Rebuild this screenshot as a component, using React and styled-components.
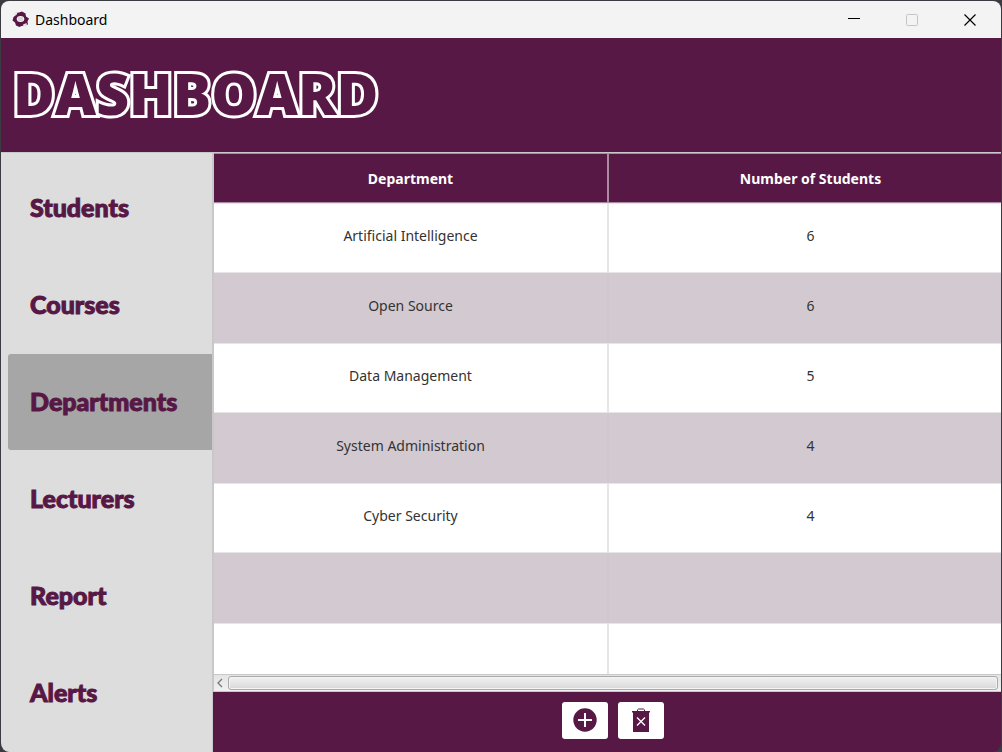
import React from "react";
import styled, { createGlobalStyle, css } from "styled-components";

const plum = "#571845";
const uiFont = '"Noto Sans", "Open Sans", sans-serif';
const displayFont = 'Lato, "Open Sans", sans-serif';

const GlobalStyle = createGlobalStyle`
  *, *::before, *::after { box-sizing: border-box; }
  body { margin: 0; background: #3b3b42; font-family: ${uiFont}; }
  button { border: 0; padding: 0; background: none; font: inherit; color: inherit; }
`;

const AppWindow = styled.div`
  display: flex;
  flex-direction: column;
  height: 100vh;
  border: 1px solid #3b3b42;
  border-bottom: 0;
  border-radius: 9px;
  overflow: hidden;
  background: ${plum};
`;

const TitleBar = styled.div`
  display: flex;
  align-items: center;
  flex: none;
  height: 37px;
  padding: 0 2px 0 11px;
  background: #f3f3f3;
  color: #000;
`;

const WindowName = styled.span`
  flex: 1;
  padding-left: 6px;
  font-size: 14px;
  line-height: 20px;
`;

const CaptionButton = styled.button`
  display: grid;
  place-items: center;
  width: 58px;
  height: 37px;
  color: ${(p) => (p.disabled ? "#c4c4c4" : "#000")};
`;

const Banner = styled.header`
  display: flex;
  align-items: center;
  flex: none;
  height: 115px;
  padding: 0 0 4px 12px;
  border-bottom: 1px solid #c8c8c8;
`;

const BannerTitle = styled.h1`
  margin: 0;
  font: 800 57px/64px "Open Sans", sans-serif;
  color: ${plum};
  -webkit-text-stroke: 6px #fff;
  paint-order: stroke fill;
  stroke-linejoin: round;
`;

const Body = styled.div`
  display: flex;
  flex: 1;
  min-height: 0;
`;

const Sidebar = styled.nav`
  display: flex;
  flex-direction: column;
  flex: none;
  gap: 1px;
  width: 212px;
  padding: 7px 0 0 7px;
  background: #ddd;
  border-right: 1px solid #c8c8c8;
`;

const NavItem = styled.a`
  display: flex;
  align-items: center;
  height: 96px;
  padding: 0 0 2px 22px;
  border-radius: 3px 0 0 3px;
  font: 900 25px/32px ${displayFont};
  color: ${plum};
  -webkit-text-stroke: 1px ${plum};
  text-decoration: none;
  background: ${(p) => (p.$active ? "#a6a6a6" : "transparent")};
`;

const Main = styled.main`
  display: flex;
  flex-direction: column;
  flex: 1;
  min-width: 0;
`;

const TableView = styled.div`
  flex: 1;
  min-height: 0;
  overflow: hidden;
  border-left: 1px solid #c8c8c8;
  background: #fff;
`;

const Table = styled.table`
  width: calc(100% + 11px);
  table-layout: fixed;
  border-collapse: separate;
  border-spacing: 0;
`;

const FirstColumn = styled.col`
  width: 49.5%;
`;

const HeadCell = styled.th`
  height: 50px;
  padding: 2px 0 0;
  background: ${plum};
  border: 0 solid #ab8ba2;
  border-width: 1px 0;
  color: #fff;
  font-size: 14px;
  font-weight: 700;
  line-height: 20px;
  &:first-child { border-right: 2px solid #ab8ba2; }
`;

const striped = css`
  background: #d3c9d0;
  border-color: #d3c9d0;
  &:first-child { border-right-color: #cfc7cc; }
`;

const Cell = styled.td`
  height: 70px;
  padding: 0 0 4px;
  text-align: center;
  font-size: 14px;
  line-height: 20px;
  color: #333;
  border: 0 solid #e6e6e6;
  border-width: 1px 0;
  &:first-child { border-right-width: 2px; }
  ${(p) => p.$striped && striped}
`;

const ScrollBar = styled.div`
  display: flex;
  align-items: center;
  flex: none;
  height: 18px;
  padding-right: 3px;
  background: linear-gradient(#e4e4e4, #f1f1f1);
  border: 0 solid #c8c8c8;
  border-width: 1px 0 1px 1px;
`;

const ScrollArrow = styled.button`
  display: grid;
  place-items: center;
  width: 14px;
  height: 14px;
  padding-right: 2px;
`;

const ScrollThumb = styled.div`
  flex: 1;
  height: 14px;
  border: 1px solid #a9a9a9;
  border-radius: 3px;
  background: linear-gradient(#f2f2f2, #d8d8d8);
  box-shadow: inset 0 0 0 1px #f4f4f4;
`;

const ActionBar = styled.footer`
  display: flex;
  justify-content: center;
  align-items: flex-start;
  flex: none;
  gap: 10px;
  height: 60px;
  padding: 10px 0 0 12px;
`;

const ActionButton = styled.button`
  display: grid;
  place-items: center;
  width: 46px;
  height: 37px;
  padding-bottom: 1px;
  border-radius: 3px;
  background: #fff;
`;

const Logo = () => (
  <svg width="17" height="17" viewBox="0 0 17 17" aria-hidden="true">
    <path d="M4 2l3-.5 3-1 3.500 2 .5 3 3 2-1.500 3 .5 3-3.500 1-3 .5-2 1-3.500-1.500-1-3L.5 9.500 1.500 6l2-1.500z" fill={plum} />
    <ellipse cx="8.500" cy="8" rx="3.800" ry="3" fill="#f3f3f3" />
    <path d="M2 4.500L2.500 2l3-.5L4.500 4zM11 13.500l3.500-1.500.5 3-3.500.5z" fill="#e9e4d8" />
    <path d="M6 7h5M6 9h5" stroke="#cdb7c6" />
  </svg>
);

const departments = [
  ["Artificial Intelligence", 6],
  ["Open Source", 6],
  ["Data Management", 5],
  ["System Administration", 4],
  ["Cyber Security", 4],
  ["", ""],
  ["", ""],
];

const sections = ["Students", "Courses", "Departments", "Lecturers", "Report", "Alerts"];

export default function App() {
  return (
    <>
      <GlobalStyle />
      <AppWindow>
        <TitleBar>
          <Logo />
          <WindowName>Dashboard</WindowName>
          <CaptionButton aria-label="Minimize">
            <svg width="12" height="12"><path d="M0 4.500h12" stroke="currentColor" /></svg>
          </CaptionButton>
          <CaptionButton aria-label="Maximize" disabled>
            <svg width="12" height="12"><rect x=".5" y=".5" width="11" height="11" rx="1" fill="none" stroke="currentColor" /></svg>
          </CaptionButton>
          <CaptionButton aria-label="Close">
            <svg width="12" height="12"><path d="M.5 .5l11 11M11.500 .5l-11 11" stroke="currentColor" strokeWidth="1.2" /></svg>
          </CaptionButton>
        </TitleBar>
        <Banner>
          <BannerTitle>DASHBOARD</BannerTitle>
        </Banner>
        <Body>
          <Sidebar>
            {sections.map((name) => (
              <NavItem key={name} href={`#${name.toLowerCase()}`} $active={name === "Departments"}>
                {name}
              </NavItem>
            ))}
          </Sidebar>
          <Main>
            <TableView>
              <Table>
                <colgroup>
                  <FirstColumn />
                  <col />
                </colgroup>
                <thead>
                  <tr>
                    <HeadCell scope="col">Department</HeadCell>
                    <HeadCell scope="col">Number of Students</HeadCell>
                  </tr>
                </thead>
                <tbody>
                  {departments.map(([name, students], i) => (
                    <tr key={i}>
                      <Cell $striped={i % 2 === 1}>{name}</Cell>
                      <Cell $striped={i % 2 === 1}>{students}</Cell>
                    </tr>
                  ))}
                </tbody>
              </Table>
            </TableView>
            <ScrollBar>
              <ScrollArrow aria-label="Scroll left">
                <svg width="6" height="10"><path d="M5 1L1 5l4 4" fill="none" stroke="#777" strokeWidth="1.3" /></svg>
              </ScrollArrow>
              <ScrollThumb />
            </ScrollBar>
            <ActionBar>
              <ActionButton aria-label="Add department">
                <svg width="24" height="24" viewBox="0 0 24 24">
                  <circle cx="12" cy="12" r="11.700" fill={plum} />
                  <path d="M12 5v14M5 12h14" stroke="#fff" strokeWidth="2" />
                </svg>
              </ActionButton>
              <ActionButton aria-label="Delete department">
                <svg width="18" height="25" viewBox="0 0 18 25">
                  <path d="M5.500 3V1.800L6.500 1h5l1 .8V3" fill="none" stroke={plum} />
                  <path d="M0 3h18v1.500h-1V24H1V4.500H0z" fill={plum} />
                  <path d="M5 9.500l8 8M13 9.500l-8 8" stroke="#fff" strokeWidth="1.300" />
                </svg>
              </ActionButton>
            </ActionBar>
          </Main>
        </Body>
      </AppWindow>
    </>
  );
}
